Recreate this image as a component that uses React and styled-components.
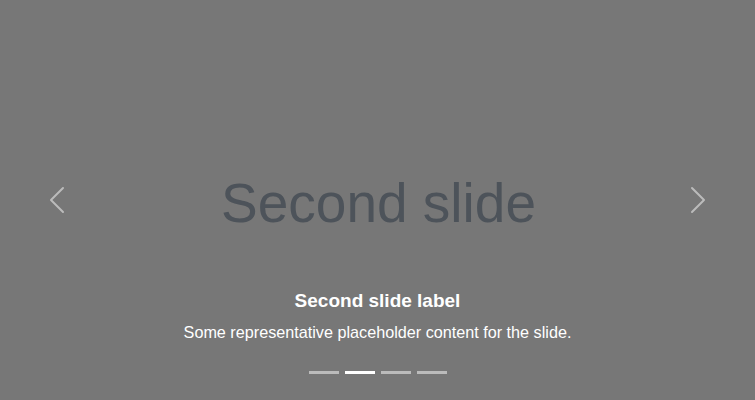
import React from "react";
import styled, { createGlobalStyle } from "styled-components";

const Global = createGlobalStyle`
  html, body { margin: 0; padding: 0; background: #777; }
  body { font-family: "Liberation Sans", Arial, Helvetica, sans-serif; -webkit-font-smoothing: antialiased; }
  * { box-sizing: border-box; }
`;

const Carousel = styled.div`
  position: relative;
  width: 100%;
  height: 400px;
  overflow: hidden;
`;

const Slide = styled.div`
  width: 100%;
  height: 400px;
  background: #777;
  display: flex;
  align-items: center;
  justify-content: center;
`;

const SlideTitle = styled.span`
  font-size: 55px;
  color: #4d535a;
  transform: translate(1px, 3px);
`;

const Caption = styled.div`
  position: absolute;
  left: 15%;
  right: 15%;
  bottom: 20px;
  padding: 20px 0;
  color: #fff;
  text-align: center;
`;

const CaptionTitle = styled.h5`
  margin: 0 0 8px;
  font-size: 19px;
  font-weight: 700;
  line-height: 24px;
  transform: translateY(1px);
`;

const CaptionText = styled.p`
  margin: 0 0 16px;
  font-size: 16.2px;
  line-height: 24px;
`;

const Control = styled.button`
  position: absolute;
  top: 0;
  bottom: 0;
  ${(p) => (p.$side === "prev" ? "left: 0;" : "right: 0;")}
  width: 15%;
  display: flex;
  align-items: center;
  justify-content: center;
  padding: 0;
  border: 0;
  background: none;
  opacity: 0.5;
  cursor: pointer;
`;

const Indicators = styled.div`
  position: absolute;
  left: 15%;
  right: 15%;
  bottom: 0;
  margin-bottom: 16px;
  display: flex;
  justify-content: center;
`;

const Indicator = styled.button`
  width: 30px;
  height: 3px;
  margin: 0 3px;
  padding: 0;
  border: 0;
  background: #fff;
  box-sizing: content-box;
  border-top: 10px solid transparent;
  border-bottom: 10px solid transparent;
  background-clip: padding-box;
  opacity: ${(p) => (p.$active ? 1 : 0.5)};
  cursor: pointer;
`;

const Chevron = ({ dir }) => (
  <svg width="32" height="32" viewBox="0 0 16 16" fill="#fff">
    {dir === "prev" ? (
      <path d="M11.354 1.646a.5.5 0 0 1 0 .708L5.707 8l5.647 5.646a.5.5 0 0 1-.708.708l-6-6a.5.5 0 0 1 0-.708l6-6a.5.5 0 0 1 .708 0z" />
    ) : (
      <path d="M4.646 1.646a.5.5 0 0 1 .708 0l6 6a.5.5 0 0 1 0 .708l-6 6a.5.5 0 0 1-.708-.708L10.293 8 4.646 2.354a.5.5 0 0 1 0-.708z" />
    )}
  </svg>
);

export default function App() {
  return (
    <>
      <Global />
      <Carousel>
        <Slide>
          <SlideTitle>Second slide</SlideTitle>
        </Slide>
        <Caption>
          <CaptionTitle>Second slide label</CaptionTitle>
          <CaptionText>Some representative placeholder content for the slide.</CaptionText>
        </Caption>
        <Control $side="prev" aria-label="Previous">
          <Chevron dir="prev" />
        </Control>
        <Control $side="next" aria-label="Next">
          <Chevron dir="next" />
        </Control>
        <Indicators>
          {[0, 1, 2, 3].map((i) => (
            <Indicator key={i} $active={i === 1} aria-label={`Slide ${i + 1}`} />
          ))}
        </Indicators>
      </Carousel>
    </>
  );
}
